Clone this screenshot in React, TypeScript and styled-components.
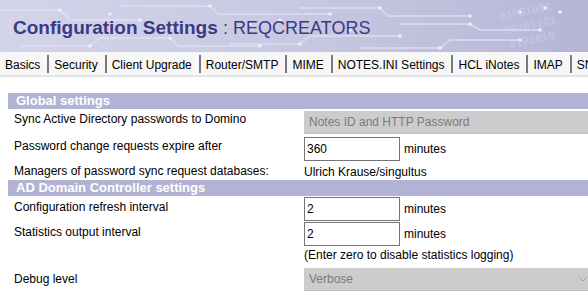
import styled, { createGlobalStyle } from "styled-components";

const Global = createGlobalStyle`
  html, body {
    margin: 0;
    padding: 0;
    background: #ffffff;
    overflow: hidden;
  }
  body {
    font-family: "Liberation Sans", Arial, sans-serif;
    font-size: 12px;
    color: #000;
  }
`;

const Page = styled.div`
  width: 600px;
  height: 294px;
  overflow: hidden;
`;

const Header = styled.div`
  position: relative;
  height: 52px;
  overflow: hidden;
  background: linear-gradient(90deg, #d3d3ea 0%, #c9c9e3 45%, #bdbddb 80%, #b3b3d6 100%);
`;

const Pattern = styled.svg`
  position: absolute;
  left: 0;
  top: 0;
`;

const Title = styled.h1`
  position: relative;
  margin: 0;
  padding: 17px 0 0 13px;
  font-family: "Liberation Sans", Arial, sans-serif;
  font-size: 19px;
  line-height: 22px;
  font-weight: 700;
  color: #3a3a86;
  white-space: nowrap;
`;

const Instance = styled.span`
  font-weight: 400;
  font-size: 18px;
`;

const TabBar = styled.div`
  display: flex;
  align-items: flex-start;
  box-sizing: border-box;
  height: 25px;
  padding-top: 3px;
  background: #f7f7f7;
  border-bottom: 2px solid #e4e4e4;
  white-space: nowrap;
`;

const Tab = styled.div`
  padding: 2px 7px 0 5px;
  height: 18px;
  box-sizing: border-box;
  line-height: 16px;
  font-size: 12px;
  border-right: 2px solid #7a7a7a;
  color: #000;
  &:last-child {
    border-right: 0;
  }
`;

const Content = styled.div`
  padding: 16px 0 0 8px;
`;

const Form = styled.table`
  width: 592px;
  border-collapse: collapse;
  table-layout: fixed;
`;

const SectionRow = styled.td`
  height: 16px;
  padding: 0 0 0 8px;
  background: #b2b2d4;
  color: #fff;
  font-size: 13px;
  font-weight: 700;
  line-height: 16px;
`;

const Label = styled.td<{ $top: number }>`
  width: 287px;
  padding: ${(p) => p.$top}px 0 0 6px;
  vertical-align: top;
  line-height: 15px;
`;

const Value = styled.td<{ $top: number; $bottom?: number }>`
  padding: ${(p) => p.$top}px 0 ${(p) => p.$bottom ?? 0}px 0;
  vertical-align: top;
  line-height: 16px;
`;

const Field = styled.div`
  display: flex;
  align-items: center;
  gap: 4px;
`;

const Input = styled.div`
  box-sizing: border-box;
  width: 96px;
  height: 24px;
  border: 1px solid #757575;
  padding: 0 2px;
  line-height: 22px;
  font-size: 12px;
  background: #fff;
`;

const Select = styled.div`
  box-sizing: border-box;
  display: flex;
  align-items: center;
  justify-content: space-between;
  width: 289px;
  height: 23px;
  padding: 0 5px 0 5px;
  background: #cccccc;
  border-bottom: 1px solid #c2c2c2;
  color: #7b7b7b;
  font-size: 12px;
`;

const Note = styled.div<{ $pad?: number }>`
  padding-top: ${(p) => p.$pad ?? 0}px;
  line-height: 16px;
`;

const tabs = [
  "Basics",
  "Security",
  "Client Upgrade",
  "Router/SMTP",
  "MIME",
  "NOTES.INI Settings",
  "HCL iNotes",
  "IMAP",
  "SNMP",
];

function Circuit() {
  const traces = [
    "M0 10 H60 L70 20 H140",
    "M20 46 H90 L100 38 H170 L178 46 H260",
    "M120 6 H210 L218 14 H330",
    "M230 44 H300 L310 36 H400",
    "M300 8 H380 L388 16 H470",
    "M360 48 H440 L450 40 H520",
    "M400 24 H470 L480 30 H540",
    "M160 28 H200",
    "M30 30 H70",
  ];
  const dots: [number, number][] = [
    [140, 20], [170, 38], [260, 46], [330, 14], [400, 36], [470, 16],
    [520, 40], [540, 30], [200, 28], [70, 30], [60, 10], [90, 46],
    [210, 6], [300, 44], [380, 8], [440, 48], [470, 24], [520, 12],
    [545, 8], [560, 12], [250, 24], [280, 20], [110, 14], [350, 30],
  ];
  return (
    <Pattern width="600" height="52" viewBox="0 0 600 52">
      {traces.map((d, i) => (
        <path key={i} d={d} fill="none" stroke="#e2e2f2" strokeWidth="1.5" opacity="0.8" />
      ))}
      {dots.map(([x, y], i) => (
        <circle key={i} cx={x} cy={y} r="1.8" fill="#eeeefa" />
      ))}
      <g fill="#d8d8ee" fontFamily="Liberation Mono, monospace" fontSize="11" opacity="0.55">
        <text x="500" y="20" transform="rotate(-12 500 20)">01001001</text>
        <text x="505" y="34" transform="rotate(-12 505 34)">10101101</text>
        <text x="510" y="48" transform="rotate(-12 510 48)">0101010</text>
      </g>
    </Pattern>
  );
}

export default function App() {
  return (
    <Page>
      <Global />
      <Header>
        <Circuit />
        <Title>
          Configuration Settings <Instance>: REQCREATORS</Instance>
        </Title>
      </Header>
      <TabBar>
        {tabs.map((t) => (
          <Tab key={t}>{t}</Tab>
        ))}
      </TabBar>
      <Content>
        <Form>
          <tbody>
            <tr>
              <SectionRow colSpan={2}>Global settings</SectionRow>
            </tr>
            <tr>
              <Label $top={3}>Sync Active Directory passwords to Domino</Label>
              <Value $top={2} $bottom={2}>
                <Select>Notes ID and HTTP Password</Select>
              </Value>
            </tr>
            <tr>
              <Label $top={3}>Password change requests expire after</Label>
              <Value $top={1} $bottom={1}>
                <Field>
                  <Input>360</Input>
                  minutes
                </Field>
              </Value>
            </tr>
            <tr>
              <Label $top={2}>Managers of password sync request databases:</Label>
              <Value $top={2}>
                <Note>Ulrich Krause/singultus</Note>
              </Value>
            </tr>
            <tr>
              <SectionRow colSpan={2}>AD Domain Controller settings</SectionRow>
            </tr>
            <tr>
              <Label $top={4}>Configuration refresh interval</Label>
              <Value $top={1}>
                <Field>
                  <Input>2</Input>
                  minutes
                </Field>
              </Value>
            </tr>
            <tr>
              <Label $top={4}>Statistics output interval</Label>
              <Value $top={1}>
                <Field>
                  <Input>2</Input>
                  minutes
                </Field>
                <Note $pad={1}>(Enter zero to disable statistics logging)</Note>
              </Value>
            </tr>
            <tr>
              <Label $top={9}>Debug level</Label>
              <Value $top={5}>
                <Select>
                  Verbose
                  <svg width="10" height="6" viewBox="0 0 10 6">
                    <polyline points="1,1 5,5 9,1" fill="none" stroke="#a0a0a0" strokeWidth="1" />
                  </svg>
                </Select>
              </Value>
            </tr>
          </tbody>
        </Form>
      </Content>
    </Page>
  );
}
